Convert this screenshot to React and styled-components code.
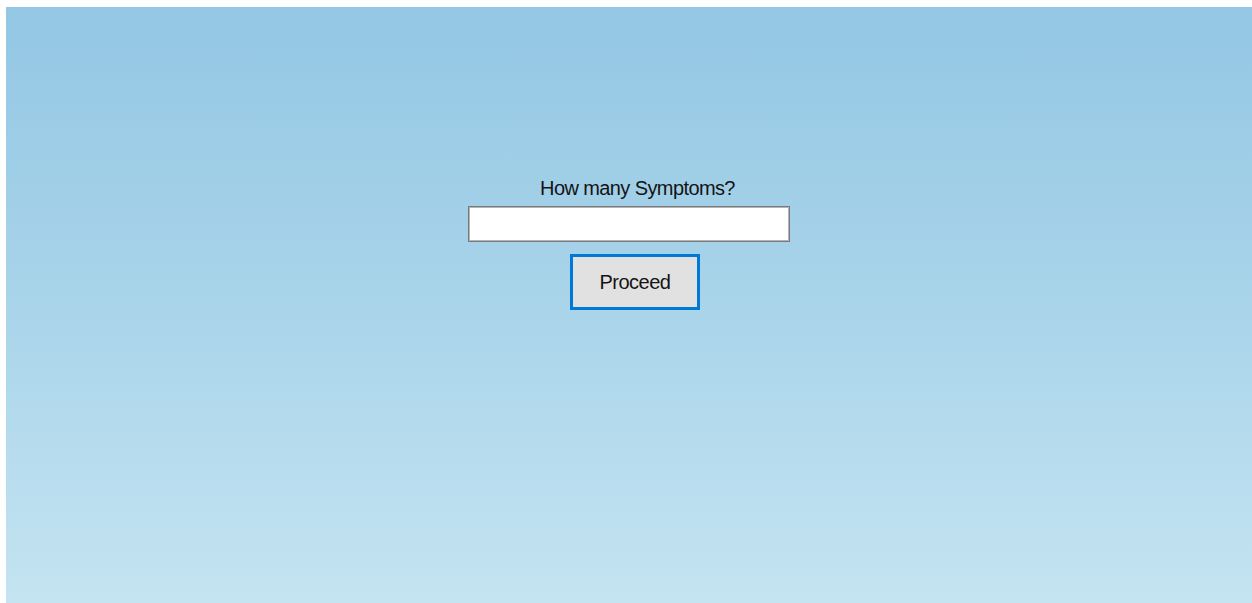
import React from 'react'
import styled, { createGlobalStyle } from 'styled-components'

const GlobalStyle = createGlobalStyle`
  html, body {
    margin: 0;
    padding: 0;
    background: #ffffff;
  }
  body {
    font-family: 'Liberation Sans', Arial, sans-serif;
  }
`

const Window = styled.div`
  margin: 7px 0 0 6px;
  height: 596px;
  background: linear-gradient(180deg, #93c7e4 0%, #a9d4ea 50%, #c4e4f1 100%);
  display: flex;
  flex-direction: column;
  align-items: center;
  padding-top: 169px;
  box-sizing: border-box;
`

const Label = styled.div`
  font-size: 20px;
  line-height: 24px;
  letter-spacing: -0.6px;
  color: #141414;
  margin-left: 17px;
`

const TextBox = styled.input`
  margin-top: 6px;
  width: 322px;
  height: 36px;
  box-sizing: border-box;
  border: 1px solid #7a7a7a;
  box-shadow: inset 0 0 0 1px #b4b4b4;
  background: #ffffff;
  outline: none;
  padding: 0 6px;
  font-family: inherit;
  font-size: 18px;
`

const Button = styled.button`
  margin-top: 12px;
  margin-left: 12px;
  width: 130px;
  height: 56px;
  box-sizing: border-box;
  border: 3px solid #0078d7;
  background: #e1e1e1;
  color: #141414;
  font-family: inherit;
  font-size: 20px;
  letter-spacing: -0.5px;
  display: flex;
  align-items: center;
  justify-content: center;
  padding: 0;
  cursor: pointer;
`

export default function App() {
  return (
    <>
      <GlobalStyle />
      <Window>
        <Label>How many Symptoms?</Label>
        <TextBox type="text" />
        <Button>Proceed</Button>
      </Window>
    </>
  )
}
